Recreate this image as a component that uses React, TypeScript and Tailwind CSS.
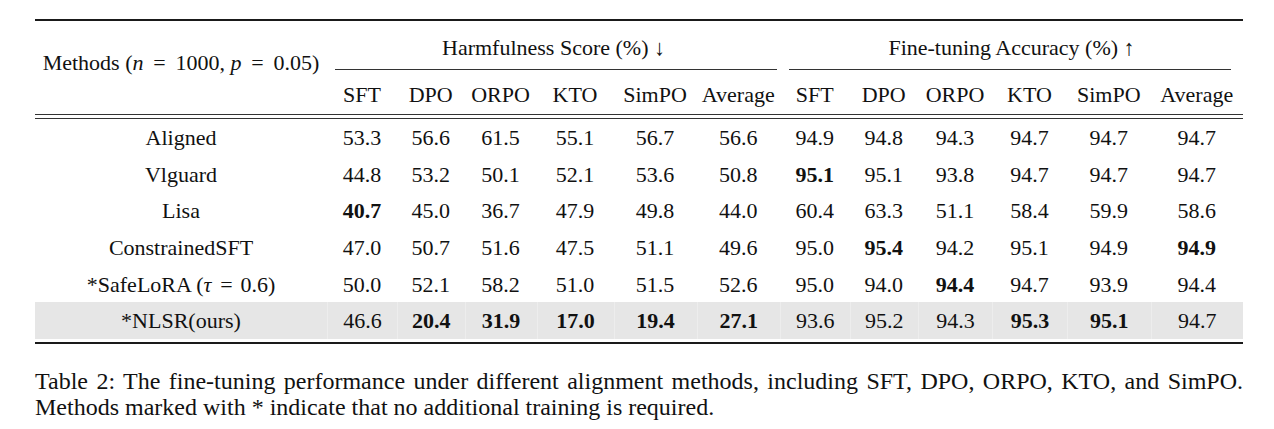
import type { ReactNode } from 'react'

// column template shared by header and body rows
const COLS =
  'grid grid-cols-[292px_70px_67.5px_72px_77px_83px_83.5px_69.5px_68.5px_74px_75px_83.5px_92.5px]'

const subHeads = ['SFT', 'DPO', 'ORPO', 'KTO', 'SimPO', 'Average']

// math-style equals sign with thick spacing
function Eq({ wide }: { wide?: boolean }) {
  return (
    <span className={`inline-block text-center ${wide ? 'mx-[7px] w-[18px]' : 'mx-[6px] w-[16px]'}`}>=</span>
  )
}

type Row = {
  method: ReactNode
  values: string[]
  bold: number[]
  shaded?: boolean
}

const rows: Row[] = [
  {
    method: 'Aligned',
    values: ['53.3', '56.6', '61.5', '55.1', '56.7', '56.6', '94.9', '94.8', '94.3', '94.7', '94.7', '94.7'],
    bold: [],
  },
  {
    method: 'Vlguard',
    values: ['44.8', '53.2', '50.1', '52.1', '53.6', '50.8', '95.1', '95.1', '93.8', '94.7', '94.7', '94.7'],
    bold: [6],
  },
  {
    method: 'Lisa',
    values: ['40.7', '45.0', '36.7', '47.9', '49.8', '44.0', '60.4', '63.3', '51.1', '58.4', '59.9', '58.6'],
    bold: [0],
  },
  {
    method: 'ConstrainedSFT',
    values: ['47.0', '50.7', '51.6', '47.5', '51.1', '49.6', '95.0', '95.4', '94.2', '95.1', '94.9', '94.9'],
    bold: [7, 11],
  },
  {
    method: (
      <>
        *SafeLoRA (<i className="pr-[1px]">τ</i>
        <Eq />
        0.6)
      </>
    ),
    values: ['50.0', '52.1', '58.2', '51.0', '51.5', '52.6', '95.0', '94.0', '94.4', '94.7', '93.9', '94.4'],
    bold: [8],
  },
  {
    method: '*NLSR(ours)',
    values: ['46.6', '20.4', '31.9', '17.0', '19.4', '27.1', '93.6', '95.2', '94.3', '95.3', '95.1', '94.7'],
    bold: [1, 2, 3, 4, 5, 9, 10],
    shaded: true,
  },
]

function BodyRow({ row }: { row: Row }) {
  return (
    <div className={`${COLS} ${row.shaded ? 'h-[37px] bg-[#e6e6e6]' : 'h-[36.6px]'}`}>
      <div className="flex items-center justify-center pt-px">{row.method}</div>
      {row.values.map((v, i) => (
        <div
          key={i}
          className={`flex items-center justify-center pt-px ${row.bold.includes(i) ? 'font-bold' : ''} ${
            row.shaded ? 'border-l border-[#ededed]' : ''
          }`}
        >
          {v}
        </div>
      ))}
    </div>
  )
}

export default function App() {
  return (
    <div className="w-[1274px] h-[429px] bg-white pl-[35px] pt-[19px] text-[#111] font-['Liberation_Serif',serif] overflow-hidden">
      <div className="w-[1208px]">
        {/* top rule */}
        <div className="h-[2px] bg-[#1a1a1a]" />

        {/* header */}
        <div className={`${COLS} grid-rows-[48px_1px_44px] text-[22px]`}>
          <div className="row-span-3 flex items-center justify-center pb-[10px]">
            <span>
              Methods (<i>n</i>
              <Eq wide />
              1000, <i>p</i>
              <Eq wide />
              0.05)
            </span>
          </div>
          <div className="col-span-6 flex items-center justify-center pt-[5px]">Harmfulness Score (%) ↓</div>
          <div className="col-span-6 flex items-center justify-center pt-[5px]">Fine-tuning Accuracy (%) ↑</div>
          <div className="col-span-6 ml-[8px] mr-[3px] bg-[#333]" />
          <div className="col-span-6 ml-[9px] mr-[12px] bg-[#333]" />
          {[...subHeads, ...subHeads].map((h, i) => (
            <div key={i} className="flex items-center justify-center pt-[5px]">
              {h}
            </div>
          ))}
        </div>

        {/* double rule */}
        <div className="h-px bg-[#333]" />
        <div className="h-[3px]" />
        <div className="h-px bg-[#333]" />

        {/* body */}
        <div className="text-[22px]">
          {rows.map((r, i) => (
            <BodyRow key={i} row={r} />
          ))}
        </div>

        {/* bottom rule */}
        <div className="mt-[3px] h-[2px] bg-[#1a1a1a]" />

        {/* caption */}
        <div className="mt-[24px] text-[24px] leading-[26px]">
          <div className="text-justify [text-align-last:justify] whitespace-nowrap">
            Table 2: The fine-tuning performance under different alignment methods, including SFT, DPO, ORPO, KTO, and
            SimPO.
          </div>
          <div>Methods marked with * indicate that no additional training is required.</div>
        </div>
      </div>
    </div>
  )
}
